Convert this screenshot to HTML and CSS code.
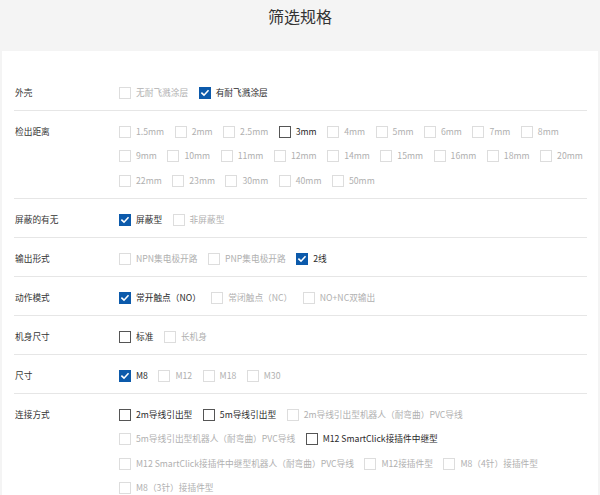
FILE: index.html
```html
<!DOCTYPE html>
<html lang="zh-CN">
<head>
<meta charset="utf-8">
<title>筛选规格</title>
<link rel="stylesheet" href="styles.css">
</head>
<body>
<div class="page">
  <h1 class="title">筛选规格</h1>
  <div class="panel">
    <div class="row">
      <div class="label">外壳</div>
      <div class="opts">
        <span class="opt off"><i class="box"></i>无耐飞溅涂层</span>
        <span class="opt on"><i class="box checked"><svg viewBox="0 0 12 12"><polyline points="2.3,6.2 4.8,8.6 9.6,3.4"/></svg></i>有耐飞溅涂层</span>
      </div>
    </div>
    <div class="row">
      <div class="label">检出距离</div>
      <div class="opts">
        <span class="opt off"><i class="box"></i>1.5mm</span>
        <span class="opt off"><i class="box"></i>2mm</span>
        <span class="opt off"><i class="box"></i>2.5mm</span>
        <span class="opt on"><i class="box"></i>3mm</span>
        <span class="opt off"><i class="box"></i>4mm</span>
        <span class="opt off"><i class="box"></i>5mm</span>
        <span class="opt off"><i class="box"></i>6mm</span>
        <span class="opt off"><i class="box"></i>7mm</span>
        <span class="opt off"><i class="box"></i>8mm</span>
        <span class="break"></span>
        <span class="opt off"><i class="box"></i>9mm</span>
        <span class="opt off"><i class="box"></i>10mm</span>
        <span class="opt off"><i class="box"></i>11mm</span>
        <span class="opt off"><i class="box"></i>12mm</span>
        <span class="opt off"><i class="box"></i>14mm</span>
        <span class="opt off"><i class="box"></i>15mm</span>
        <span class="opt off"><i class="box"></i>16mm</span>
        <span class="opt off"><i class="box"></i>18mm</span>
        <span class="opt off"><i class="box"></i>20mm</span>
        <span class="break"></span>
        <span class="opt off"><i class="box"></i>22mm</span>
        <span class="opt off"><i class="box"></i>23mm</span>
        <span class="opt off"><i class="box"></i>30mm</span>
        <span class="opt off"><i class="box"></i>40mm</span>
        <span class="opt off"><i class="box"></i>50mm</span>
      </div>
    </div>
    <div class="row">
      <div class="label">屏蔽的有无</div>
      <div class="opts">
        <span class="opt on"><i class="box checked"><svg viewBox="0 0 12 12"><polyline points="2.3,6.2 4.8,8.6 9.6,3.4"/></svg></i>屏蔽型</span>
        <span class="opt off"><i class="box"></i>非屏蔽型</span>
      </div>
    </div>
    <div class="row">
      <div class="label">输出形式</div>
      <div class="opts">
        <span class="opt off"><i class="box"></i>NPN集电极开路</span>
        <span class="opt off"><i class="box"></i>PNP集电极开路</span>
        <span class="opt on"><i class="box checked"><svg viewBox="0 0 12 12"><polyline points="2.3,6.2 4.8,8.6 9.6,3.4"/></svg></i>2线</span>
      </div>
    </div>
    <div class="row">
      <div class="label">动作模式</div>
      <div class="opts">
        <span class="opt on"><i class="box checked"><svg viewBox="0 0 12 12"><polyline points="2.3,6.2 4.8,8.6 9.6,3.4"/></svg></i>常开触点（NO）</span>
        <span class="opt off"><i class="box"></i>常闭触点（NC）</span>
        <span class="opt off"><i class="box"></i>NO+NC双输出</span>
      </div>
    </div>
    <div class="row">
      <div class="label">机身尺寸</div>
      <div class="opts">
        <span class="opt on"><i class="box"></i>标准</span>
        <span class="opt off"><i class="box"></i>长机身</span>
      </div>
    </div>
    <div class="row">
      <div class="label">尺寸</div>
      <div class="opts">
        <span class="opt on"><i class="box checked"><svg viewBox="0 0 12 12"><polyline points="2.3,6.2 4.8,8.6 9.6,3.4"/></svg></i>M8</span>
        <span class="opt off"><i class="box"></i>M12</span>
        <span class="opt off"><i class="box"></i>M18</span>
        <span class="opt off"><i class="box"></i>M30</span>
      </div>
    </div>
    <div class="row last">
      <div class="label">连接方式</div>
      <div class="opts">
        <span class="opt on"><i class="box"></i>2m导线引出型</span>
        <span class="opt on"><i class="box"></i>5m导线引出型</span>
        <span class="opt off"><i class="box"></i>2m导线引出型机器人（耐弯曲）PVC导线</span>
        <span class="break"></span>
        <span class="opt off"><i class="box"></i>5m导线引出型机器人（耐弯曲）PVC导线</span>
        <span class="opt on"><i class="box"></i>M12 SmartClick接插件中继型</span>
        <span class="break"></span>
        <span class="opt off"><i class="box"></i>M12 SmartClick接插件中继型机器人（耐弯曲）PVC导线</span>
        <span class="opt off"><i class="box"></i>M12接插件型</span>
        <span class="opt off"><i class="box"></i>M8（4针）接插件型</span>
        <span class="break"></span>
        <span class="opt off"><i class="box"></i>M8（3针）接插件型</span>
      </div>
    </div>
  </div>
</div>
</body>
</html>
```
FILE: styles.css
```css
html, body {
  margin: 0;
  padding: 0;
  background: #f4f4f4;
}
body {
  font-family: "Noto Sans CJK SC", "Noto Sans", sans-serif;
  color: #333;
}
.page {
  width: 600px;
}
.title {
  margin: 0;
  height: 51px;
  box-sizing: border-box;
  padding-top: 4px;
  text-align: center;
  font-size: 16px;
  line-height: 24px;
  font-weight: normal;
  color: #333;
}
.panel {
  background: #fff;
  margin: 0 2px;
  padding: 21px 11px 0 12px;
  min-height: 460px;
}
.row {
  display: flex;
  padding-top: 13.5px;
  border-bottom: 1px solid #e6e6e6;
}
.row.last {
  border-bottom: none;
}
.label {
  width: 104px;
  flex: none;
  font-size: 8.7px;
  line-height: 14.5px;
  color: #333;
  padding-left: 1px;
}
.opts {
  flex: 1;
  display: flex;
  flex-wrap: wrap;
  margin-right: -11px;
}
.break {
  flex-basis: 100%;
  height: 0;
}
.opt {
  display: inline-flex;
  align-items: center;
  height: 14.5px;
  margin: 0 10.5px 10px 0;
  font-size: 8.7px;
  line-height: 14.5px;
  white-space: nowrap;
}
.box {
  display: inline-block;
  width: 12px;
  height: 12px;
  box-sizing: border-box;
  border: 1px solid #ddd;
  margin-right: 5px;
  background: #fff;
}
.opt.off {
  color: #b0b0b0;
}
.opt.on {
  color: #2a2a2a;
}
.opt.on .box {
  border-color: #555;
}
.box.checked,
.opt.on .box.checked {
  background: #0c5aab;
  border-color: #0c5aab;
}
.box svg {
  display: block;
  width: 10px;
  height: 10px;
}
.box svg polyline {
  fill: none;
  stroke: #fff;
  stroke-width: 1.9;
  stroke-linecap: square;
}
```
